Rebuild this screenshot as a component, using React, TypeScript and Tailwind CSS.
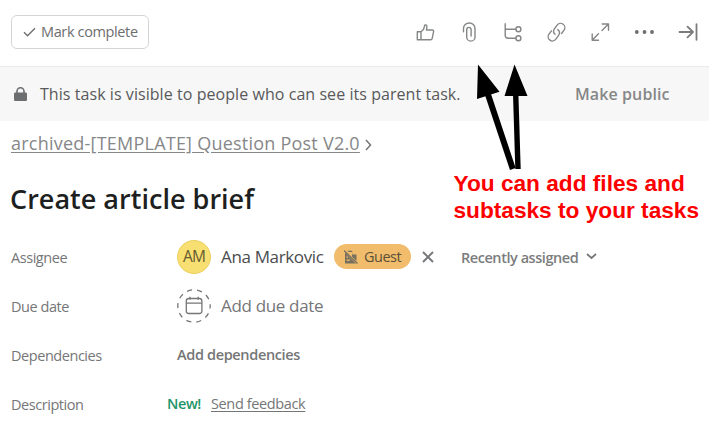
import React from 'react'

const fields = ['Assignee', 'Due date', 'Dependencies', 'Description']

const ToolbarIcon: React.FC<{ children: React.ReactNode; className?: string }> = ({ children, className = '' }) => (
  <button className={`shrink-0 ${className}`}>
    <svg
      width="20"
      height="20"
      viewBox="0 0 20 20"
      fill="none"
      stroke="#858687"
      strokeWidth="1.4"
      strokeLinecap="round"
      strokeLinejoin="round"
    >
      {children}
    </svg>
  </button>
)

const Toolbar = () => (
  <div className="flex items-center pr-[15px]">
    {/* Like */}
    <ToolbarIcon className="mr-6">
      <path d="M1.3 9.7h3.7v8.1H1.3zM5 9.7l2.5-2.2 1.2-4.1c.3-.9 2.2-.6 2.2 1.1L10.5 8h5.800c.9 0 1.500.8 1.300 1.700l-1.400 6.700c-.2.9-.8 1.400-1.600 1.400H5" />
    </ToolbarIcon>
    {/* Attachment */}
    <ToolbarIcon className="mr-6">
      <path d="M3.500 9.700V6.500a5.750 5.500 0 0 1 11.500 0v8.400a4.150 4.200 0 0 1-8.300 0V7.700a2.200 2.300 0 0 1 4.400 0v6.300" />
    </ToolbarIcon>
    {/* Subtasks */}
    <ToolbarIcon className="mr-[22px]">
      <path d="M1.200 1.800v11.400c0 1.800 1 3 3 3h7.500M1.200 7.300h10.500" />
      <circle cx="14.400" cy="7.300" r="2.500" />
      <circle cx="14.400" cy="16.200" r="2.500" />
    </ToolbarIcon>
    {/* Link */}
    <ToolbarIcon className="mr-6">
      <path d="M9 12.300a4.200 4.200 0 0 1-.8-5.200l2.900-4a4.300 4.300 0 0 1 6-.9 4.300 4.300 0 0 1 .9 6l-2.400 3.300M11.800 7.600a4.200 4.200 0 0 1 .9 5.600l-2.800 4a4.300 4.300 0 0 1-6 .9 4.300 4.300 0 0 1-.9-6L5.400 8.800" />
    </ToolbarIcon>
    {/* Full screen */}
    <ToolbarIcon className="mr-6">
      <path d="M12 8.500l6-6M12.200 2h6.300v6.300M8.500 11.700l-6 6M2.200 11.900v6.300h6.300" />
    </ToolbarIcon>
    {/* More actions */}
    <ToolbarIcon className="mr-6">
      <g fill="#6d6e6f" stroke="none">
        <circle cx="2.800" cy="10" r="1.900" />
        <circle cx="10.500" cy="10" r="1.900" />
        <circle cx="18" cy="10" r="1.900" />
      </g>
    </ToolbarIcon>
    {/* Close panel */}
    <ToolbarIcon>
      <path strokeWidth="1.800" stroke="#7a7b7c" d="M1.500 10h13.500M9.500 4.700L15 10l-5.500 5.300M18.500 2.200v15.600" />
    </ToolbarIcon>
  </div>
)

const Label: React.FC<{ children: React.ReactNode }> = ({ children }) => (
  <div className="w-[166px] shrink-0 pt-[3px] text-[14.5px] tracking-[-0.45px] text-[#757677]">{children}</div>
)

const AssigneeValue = () => (
  <>
    <div className="flex h-[34px] w-[34px] items-center justify-center rounded-full border border-[#eccf5f] bg-[#f8df72] text-[15.5px] tracking-[-0.8px] text-[#635a2f]">
      AM
    </div>
    <span className="ml-[10px] w-[103px] text-[17px] tracking-[-0.35px] text-[#4b4c4d]">Ana Markovic</span>
    <span className="ml-[10px] flex h-[25px] w-[77px] items-center rounded-full bg-[#f1bd6c] pl-[10px] text-[14.5px] tracking-[-0.5px] text-[#5d5039]">
      <svg width="14" height="14" viewBox="0 0 14 14" className="mr-[6px]" fill="#77705f">
        <path d="M0 0.500L13.500 13.500" stroke="#77705f" strokeWidth="1.300" />
        <path fillRule="evenodd" d="M1 2.500L12 13.500H1zM2.500 6.500v1.200h1.500V6.500zM2.500 9.500v1.200h3.500V9.500z" />
        <path d="M3.500 .8h4.700v3.700h4.300v6.500L8 6.500V2H4.500z" />
      </svg>
      Guest
    </span>
    <svg width="12" height="12" viewBox="0 0 12 12" className="ml-[11px]" stroke="#757677" strokeWidth="1.9">
      <path d="M1 1l10 10M11 1L1 11" />
    </svg>
    <span className="ml-[27px] w-[118px] pt-[2px] text-[14.5px] font-semibold tracking-[-0.45px] text-[#7b7c7d]">
      Recently assigned
    </span>
    <svg width="11" height="7" viewBox="0 0 11 7" className="ml-[7px]" fill="none" stroke="#757677" strokeWidth="1.7">
      <path d="M1 1l4.500 4L10 1" />
    </svg>
  </>
)

const DueDateValue = () => (
  <>
    <svg width="34" height="34" viewBox="0 0 34 34" fill="none" stroke="#757677" strokeWidth="1.3">
      <circle cx="17" cy="17" r="16.2" strokeDasharray="5.1 5.08" strokeDashoffset="2.5" />
      <rect x="9.300" y="9.500" width="15.600" height="15" rx="2.500" />
      <path d="M9.300 14.200h15.600M13 7.700v3M21.200 7.700v3" />
    </svg>
    <span className="ml-[10px] text-[17px] tracking-[-0.33px] text-[#757677]">Add due date</span>
  </>
)

const values = [
  <AssigneeValue />,
  <DueDateValue />,
  <span className="text-[14.5px] font-semibold tracking-[-0.35px] text-[#757677]">Add dependencies</span>,
  <div className="-ml-[10px] flex text-[14.5px]">
    <span className="w-[44px] font-semibold tracking-[-0.4px] text-[#1f9468]">New!</span>
    <span className="tracking-[-0.37px] text-[#757677] underline underline-offset-2">Send feedback</span>
  </div>,
]

const Annotation = () => (
  <>
    <svg className="absolute left-[470px] top-[60px]" width="64" height="112" viewBox="470 60 64 112">
      <path d="M478 64.500l21.500 27.300-22.500 7.200zM514.500 64.500l13 31.500h-23z" />
      <path d="M487.500 93l25.300 76" stroke="#000" strokeWidth="6" />
      <path d="M515.700 94l2.300 75" stroke="#000" strokeWidth="5.400" />
    </svg>
    <p className="absolute left-[453.5px] top-[170px] whitespace-nowrap font-['Liberation_Sans',Arial,sans-serif] text-[22.67px] font-bold leading-[27px] text-[#fd0000]">
      You can add files and
      <br />
      subtasks to your tasks
    </p>
  </>
)

export default function App() {
  return (
    <div className="relative h-[425px] w-[713px] overflow-hidden bg-white font-['Open_Sans','Noto_Sans',sans-serif]">
      <header className="flex h-[66px] items-center justify-between pb-[3px]">
        <button className="ml-[11px] flex h-[34px] w-[138px] items-center rounded-[6px] border border-[#d5d5d6] pl-[11px] text-[14.5px] tracking-[-0.37px] text-[#6d6e6f]">
          <svg width="13" height="10" viewBox="0 0 13 10" className="mr-[5px]" fill="none" stroke="#6d6e6f" strokeWidth="1.4">
            <path d="M1 5.300l3.500 3.400L12 1.200" />
          </svg>
          Mark complete
        </button>
        <Toolbar />
      </header>

      <div className="flex h-[55px] w-[709px] items-center border-t border-[#e9e9ea] bg-[#f7f7f7] text-[16px]">
        <svg width="13" height="14" viewBox="0 0 13 14" className="ml-[14px]" fill="#6d6e6f">
          <rect y="5.500" width="13" height="8.500" rx="1.200" />
          <path d="M3 6V4.300a3.500 3.500 0 0 1 7 0V6" fill="none" stroke="#6d6e6f" strokeWidth="1.600" />
        </svg>
        <span className="ml-[13px] w-[535px] tracking-[0.06px] text-[#58595a]">
          This task is visible to people who can see its parent task.
        </span>
        <span className="whitespace-nowrap font-semibold tracking-[0.1px] text-[#868788]">Make public</span>
      </div>

      <div className="flex h-[44px] items-center pl-[11px] text-[18px] tracking-[0.23px] text-[#868788]">
        <span className="underline underline-offset-2">archived-[TEMPLATE] Question Post V2.0</span>
        <svg width="7" height="12" viewBox="0 0 7 12" className="ml-[5px] mt-[3px]" fill="none" stroke="#757677" strokeWidth="1.500">
          <path d="M1 1l4.500 5L1 11" />
        </svg>
      </div>

      <h1 className="flex h-[67px] items-center pl-[10px] pt-[2px] text-[27px] font-semibold tracking-[0.02px] text-[#1e1f21]">
        Create article brief
      </h1>

      {fields.map((field, i) => (
        <div key={field} className="flex h-[49px] items-center whitespace-nowrap pl-[11px]">
          <Label>{field}</Label>
          {values[i]}
        </div>
      ))}

      <Annotation />
    </div>
  )
}
